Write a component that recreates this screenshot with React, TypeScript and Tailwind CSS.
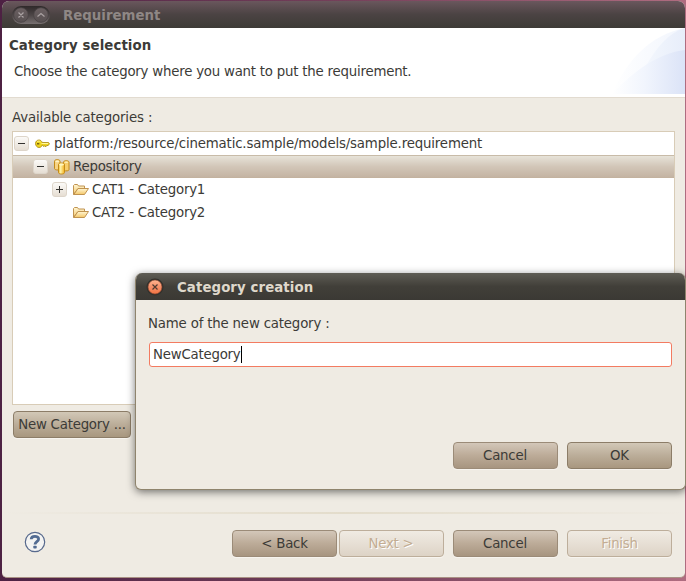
import React from 'react';

type ButtonProps = { label: string; width?: string; nudge?: string; disabled?: boolean; dark?: boolean };

function Button({ label, width = 'w-[105px]', nudge = '', disabled, dark }: ButtonProps) {
  const look = disabled
    ? 'border-[#bdae9b] bg-linear-to-b from-[#f0ebe3] to-[#ddd3c6] text-[#c3ad93] [text-shadow:1px_1px_0_#fff]'
    : dark
      ? 'border-[#8c7d68] bg-linear-to-b from-[#d2c8b7] via-[#bbad99] to-[#a8977f] text-[#3c3b37]'
      : 'border-[#9b8b78] bg-linear-to-b from-[#d3c7b9] via-[#bcab98] to-[#a79580] text-[#3c3b37]';
  return (
    <button
      type="button"
      className={`flex h-[27px] shrink-0 items-center justify-center rounded-[4px] border whitespace-nowrap shadow-[0_1px_0_#f7f4ef] ${width} ${nudge} ${look}`}
    >
      {label}
    </button>
  );
}

function Expander({ open }: { open: boolean }) {
  return (
    <svg width="15" height="15" viewBox="0 0 15 15" className="shrink-0">
      <defs>
        <linearGradient id="expander" x2="0" y2="1">
          <stop stopColor="#fcfbf9" />
          <stop offset="1" stopColor="#e5ddd2" />
        </linearGradient>
      </defs>
      <rect x=".5" y=".5" width="14" height="14" rx="2.5" fill="url(#expander)" stroke="#ddd5ca" />
      <path d={open ? 'M4 7.5h7' : 'M4 7.5h7M7.5 4v7'} stroke="#33322f" />
    </svg>
  );
}

function KeyIcon() {
  return (
    <svg width="16" height="16" viewBox="0 0 16 16" className="shrink-0">
      <path d="M5 4C3 4 1.500 5.500 1.500 7.500S3 11.500 5 11.500c1.600 0 2.700-.9 3.200-2.200H9l.8 1.400 1-1.200.9 1.400 1-1.400h1.500l1.300-1.800-1-1.200H8.200C7.600 4.900 6.500 4 5 4Z" fill="#f0d620" stroke="#a88612" strokeWidth=".8" />
      <path d="M3.200 5.700c.9-.8 2.400-.8 3.200.1M7.500 7.500H14" stroke="#fff79b" fill="none" />
      <path d="M3 7.800h2.300" stroke="#79610d" strokeWidth="1.500" />
    </svg>
  );
}

function RepositoryIcon() {
  return (
    <svg width="16" height="16" viewBox="0 0 16 16" className="shrink-0">
      <defs>
        <linearGradient id="cylinder" x2="1">
          <stop stopColor="#f4b92c" />
          <stop offset=".35" stopColor="#fff3a8" />
          <stop offset="1" stopColor="#f2ac17" />
        </linearGradient>
      </defs>
      <g stroke="#c48a16">
        <path d="M.5 2.200v7.300c0 .9 1.300 1.500 3.500 1.500h2V2.200C6 .1.5.1.5 2.200Z" fill="#f7d486" />
        <path d="M9.500 3.200v8.300c3 .9 5.500.3 5.500-1V3.200c0-2-5.500-2-5.500 0Z" fill="#f7ce6c" />
        <path d="M4.500 5.500v8c0 2 6 2 6 0v-8c0-2-6-2-6 0Z" fill="url(#cylinder)" />
      </g>
      <ellipse cx="3.300" cy="2.400" rx="2" ry=".8" fill="#fff3c4" />
      <ellipse cx="12.300" cy="3.300" rx="2" ry=".8" fill="#fff0b5" />
      <ellipse cx="7.500" cy="5.600" rx="2.500" ry="1.100" fill="#fff6bf" />
    </svg>
  );
}

function FolderIcon() {
  return (
    <svg width="16" height="16" viewBox="0 0 16 16" className="shrink-0">
      <defs>
        <linearGradient id="folder" x2="0" y2="1">
          <stop stopColor="#fff6d4" />
          <stop offset="1" stopColor="#f4c768" />
        </linearGradient>
      </defs>
      <g stroke="#c09350" fill="url(#folder)" strokeLinejoin="round">
        <path d="M.5 12.500v-9l1-1h3l1 1.500h6v2.500h-6.500l-4.500 6Z" />
        <path d="M5 6.500h10.500l-4 6H.8Z" />
      </g>
    </svg>
  );
}

function HelpIcon() {
  return (
    <svg width="22" height="22" viewBox="0 0 22 22" className="shrink-0">
      <circle cx="11" cy="11" r="9.700" fill="#f3f3f2" stroke="#586a8d" strokeWidth="1.200" />
      <path d="M7.200 8.200C7.300 4.500 14.600 4.400 14.600 8c0 2.600-3.600 2.700-3.600 5.500" fill="none" stroke="#526b92" strokeWidth="2.800" />
      <rect x="9.300" y="14.800" width="3.400" height="2.700" rx=".8" fill="#526b92" />
    </svg>
  );
}

function WindowControls() {
  return (
    <svg width="40" height="20" viewBox="0 0 40 20" className="shrink-0">
      <defs>
        <linearGradient id="tray" x2="0" y2="1">
          <stop stopColor="#2f292a" />
          <stop offset=".5" stopColor="#4c4546" />
          <stop offset="1" stopColor="#777070" />
        </linearGradient>
        <linearGradient id="knob" x2="0" y2="1">
          <stop stopColor="#6b6062" />
          <stop offset="1" stopColor="#575051" />
        </linearGradient>
      </defs>
      <rect x="1" y="1" width="38" height="18" rx="9" fill="url(#tray)" />
      <circle cx="10" cy="10" r="7.300" fill="url(#knob)" stroke="#484142" strokeWidth=".8" />
      <circle cx="30" cy="10" r="7.300" fill="url(#knob)" stroke="#484142" strokeWidth=".8" />
      <path d="m7.500 7.500 5 5m0-5-5 5M26.500 11.500l3.500-3 3.500 3" fill="none" stroke="#aaa2a3" strokeWidth="1.200" />
    </svg>
  );
}

function CloseControl() {
  return (
    <svg width="18" height="18" viewBox="0 0 18 18" className="shrink-0">
      <defs>
        <linearGradient id="close" x2="0" y2="1">
          <stop stopColor="#ffb590" />
          <stop offset=".5" stopColor="#f58f68" />
          <stop offset="1" stopColor="#f27443" />
        </linearGradient>
      </defs>
      <circle cx="9" cy="9" r="8.500" fill="#30302c" />
      <circle cx="9" cy="9" r="7" fill="url(#close)" stroke="#87412b" strokeWidth=".6" />
      <path d="m6.500 6.500 5 5m0-5-5 5" stroke="#513b31" strokeWidth="1.200" />
    </svg>
  );
}

function BannerArt() {
  return (
    <svg width="73" height="66" viewBox="0 0 73 66" className="shrink-0">
      <defs>
        <linearGradient id="wave" x2="1">
          <stop stopColor="#fff" />
          <stop offset=".45" stopColor="#f1f5fd" />
          <stop offset="1" stopColor="#dbe3f7" />
        </linearGradient>
        <linearGradient id="arc" x2="1">
          <stop stopColor="#fff" />
          <stop offset="1" stopColor="#f1f5fd" />
        </linearGradient>
        <linearGradient id="crest" x2="1">
          <stop stopColor="#f3f7fd" />
          <stop offset="1" stopColor="#e7edfa" />
        </linearGradient>
      </defs>
      <path d="M0 66C15 32 38 7 73 0v66Z" fill="url(#arc)" />
      <path d="M34 38C44 20 56 5 73 0v40Z" fill="url(#crest)" />
      <path d="M0 66C22 43 46 25 73 22v44Z" fill="url(#wave)" />
    </svg>
  );
}

export default function App() {
  return (
    <div className="relative flex h-[581px] w-[686px] overflow-hidden bg-linear-to-r from-[#4d2143] via-[#75405a] to-[#af6c80] pt-px pr-px pb-[3px] pl-[2px] font-['DejaVu_Sans',sans-serif] text-[13.33px] leading-[23px] tracking-[-0.22px] text-[#3c3b37]">
      <main className="flex w-full flex-col overflow-hidden rounded-t-[7px] rounded-b-[5px] border-b border-[#a99184] bg-[#efebe3]">
        <div className="flex h-[27px] shrink-0 items-center bg-linear-to-b from-[#6a575d] via-[#4b4343] to-[#3d3b36] pl-[9px] font-bold tracking-normal text-[#8f8785]">
          <WindowControls />
          <h1 className="ml-[12px] pt-px">Requirement</h1>
        </div>
        <header className="flex h-[70px] shrink-0 justify-between border-b border-[#e2dbd0] bg-white">
          <div className="pt-[6px] pl-[7px]">
            <h2 className="font-bold tracking-[0.08px]">Category selection</h2>
            <p className="mt-[3px] pl-[5px]">Choose the category where you want to put the requirement.</p>
          </div>
          <BannerArt />
        </header>
        <section className="flex flex-col items-start pt-[8px] pr-[10px] pl-[10px]">
          <label className="tracking-[-0.13px]">Available categories :</label>
          <div className="mt-[2px] h-[274px] w-full border border-[#d8ccb7] bg-white">
            <div className="flex h-[23px] items-center pl-[1px]">
              <Expander open />
              <span className="ml-[5px] flex items-center gap-[4px] tracking-[-0.16px]"><KeyIcon />platform:/resource/cinematic.sample/models/sample.requirement</span>
            </div>
            <div className="flex h-[23px] items-center border-t border-b border-t-[#c8bba8] border-b-[#c3b29f] bg-linear-to-b from-[#e7e3d9] via-[#d2c6b8] to-[#c4b4a3] pl-[20px]">
              <Expander open />
              <span className="ml-[6px] flex items-center gap-[3px]"><RepositoryIcon />Repository</span>
            </div>
            <div className="flex h-[23px] items-center pl-[39px]">
              <Expander open={false} />
              <span className="ml-[6px] flex items-center gap-[3px]"><FolderIcon />CAT1 - Category1</span>
            </div>
            <div className="flex h-[23px] items-center gap-[3px] pl-[60px]"><FolderIcon />CAT2 - Category2</div>
          </div>
          <div className="mt-[6px] ml-px"><Button label="New Category ..." width="w-[118px]" dark /></div>
        </section>
        <div className="mt-[74px] h-[2px] shrink-0 bg-linear-to-r from-transparent via-[#e3dccb] to-transparent" />
        <footer className="flex items-start pt-[16px] pr-[13px] pl-[22px]">
          <div className="pt-px"><HelpIcon /></div>
          <div className="ml-auto flex">
            <Button label="< Back" />
            <div className="ml-[2px]"><Button label="Next >" nudge="pr-px" disabled /></div>
            <div className="ml-[9px]"><Button label="Cancel" nudge="pr-px" /></div>
            <div className="ml-[9px]"><Button label="Finish" disabled /></div>
          </div>
        </footer>
      </main>
      <div role="dialog" className="absolute top-[273px] left-[135px] flex h-[217px] w-[551px] flex-col overflow-hidden rounded-t-[7px] rounded-b-[6px] border-r border-b border-l border-[#8f846d] bg-[#efebe3] shadow-[0_2px_9px_0_#0008]">
        <div className="flex h-[27px] shrink-0 items-center bg-linear-to-b from-[#5f5d55] via-[#413f39] to-[#3b3934] pl-[10px] font-bold tracking-[0.08px] text-[#dfd8cb]">
          <CloseControl />
          <h2 className="ml-[13px] pt-px">Category creation</h2>
        </div>
        <div className="px-[12px] pt-[12px]">
          <label className="tracking-[-0.18px]">Name of the new category :</label>
          <div className="mt-[7px] mr-px ml-px flex h-[25px] items-center rounded-[3px] border border-[#f37b61] bg-white pl-[3px]">
            NewCategory<span className="h-[17px] w-px bg-black" />
          </div>
        </div>
        <div className="mt-auto flex justify-end gap-[9px] pr-[13px] pb-[20px]">
          <Button label="Cancel" nudge="pr-px" />
          <Button label="OK" dark />
        </div>
      </div>
    </div>
  );
}
